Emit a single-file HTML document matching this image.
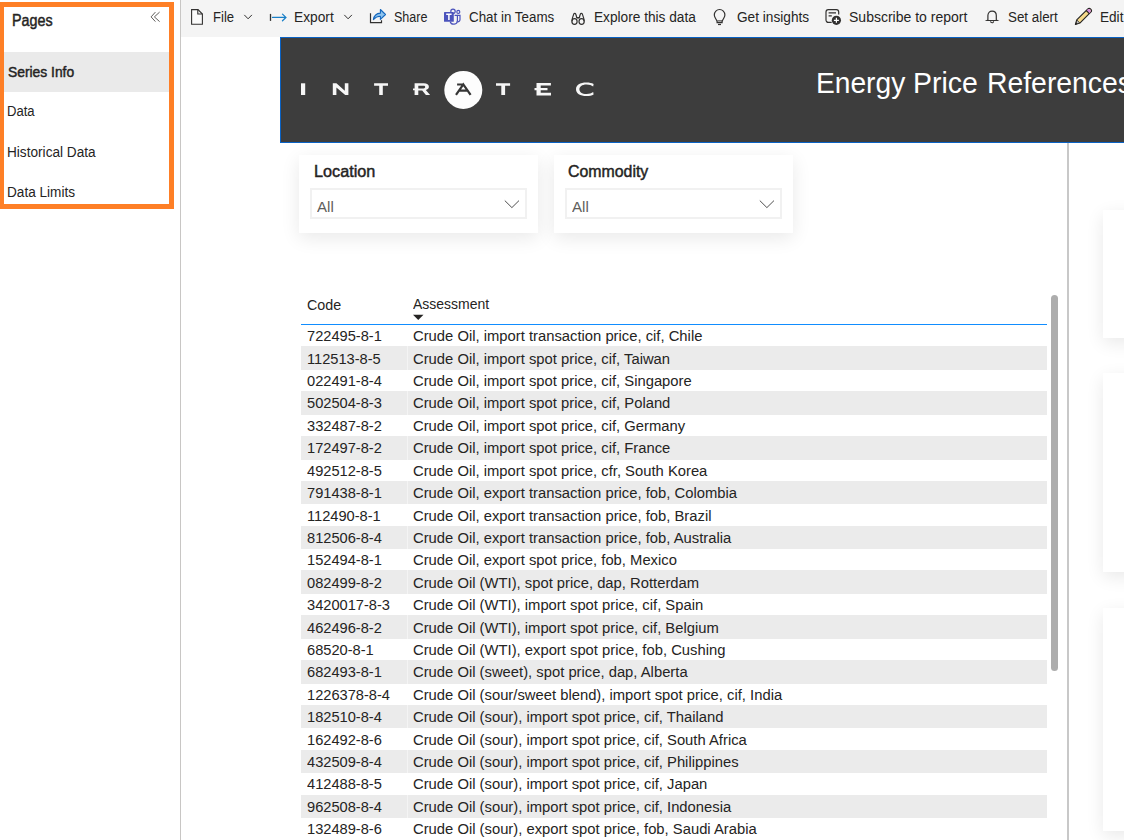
<!DOCTYPE html>
<html><head><meta charset="utf-8">
<style>
*{margin:0;padding:0;box-sizing:border-box}
html,body{width:1124px;height:840px;overflow:hidden;background:#fff;font-family:"Liberation Sans",sans-serif;color:#252423}
.abs{position:absolute}
.tx{position:absolute;white-space:nowrap;line-height:1;transform-origin:0 0}
.card{position:absolute;background:#fff;box-shadow:0 5px 18px rgba(0,0,0,0.09)}
.dd{position:absolute;border:2px solid #f1f1f1;background:#fff}
.row{position:absolute;left:301px;width:746px;height:22.41px}
.row.g{background:#ebebeb}
.c1,.c2{font-size:15.4px;color:#252423}
</style></head>
<body>
<div class="abs" style="left:180px;top:0;width:1px;height:840px;background:#c8c6c4"></div>
<div class="abs" style="left:-1px;top:2px;width:175px;height:207px;border:5px solid #fe7f26"></div>
<div class="abs" style="left:4px;top:52px;width:165px;height:40px;background:#eaeaea"></div>
<div id="pages" class="tx" style="left:12.00px;top:12.92px;font-size:16px;color:#252423;-webkit-text-stroke:0.45px #252423;transform:scaleX(0.8945)">Pages</div><div id="p1" class="tx" style="left:7.80px;top:64.78px;font-size:14px;color:#252423;-webkit-text-stroke:0.45px #252423;transform:scaleX(0.9883)">Series Info</div><div id="p2" class="tx" style="left:6.90px;top:104.18px;font-size:14px;font-weight:normal;color:#252423;transform:scaleX(0.9343)">Data</div><div id="p3" class="tx" style="left:6.60px;top:145.08px;font-size:14px;font-weight:normal;color:#252423;transform:scaleX(0.9737)">Historical Data</div><div id="p4" class="tx" style="left:6.60px;top:185.28px;font-size:14px;font-weight:normal;color:#252423;transform:scaleX(0.9716)">Data Limits</div>
<div class="abs" style="left:181px;top:0;width:943px;height:37px;background:#f4f4f4"></div>
<svg class="abs" style="left:0;top:0" width="1124" height="37" viewBox="0 0 1124 37">
 <g fill="none" stroke="#323130" stroke-width="1.1">
  <path d="M191.6 9.6h6.4l4.4 4.4v10.2h-10.8z" fill="#fbfbfb"/>
  <path d="M197.8 9.6v4.4h4.6"/>
  <path d="M244.3 14.9l3.8 3.9 3.8-3.9" stroke-width="1"/>
  <path d="M344.3 14.9l3.8 3.9 3.8-3.9" stroke-width="1"/>
  <path d="M270.5 13.9v7" stroke-width="1.3"/>
  <path d="M370.5 13.2v9.4h11v-2.4" stroke-width="1.2"/>
  <path d="M714.3 15.1c0-3.3 2.4-5.6 5.3-5.6s5.3 2.3 5.3 5.6c0 2.6-2.1 3.9-2.8 6.4v1.2h-5v-1.2c-0.7-2.5-2.8-3.8-2.8-6.4z" stroke-width="1.2"/>
  <path d="M717.3 20.9h5" stroke-width="1"/>
  <path d="M718 24.5h3" stroke-width="1.2"/>
  <path d="M826 20.2v-8.3a2.3 2.3 0 0 1 2.3-2.3h8.1a2.3 2.3 0 0 1 2.3 2.3v2.7M831.7 22.4h-3.4a2.3 2.3 0 0 1-2.3-2.3" stroke-width="1.2"/>
  <path d="M828.6 12.9h7.4M828.6 15.9h3.2" stroke-width="1.3"/>
  <path d="M987.9 19.9v-4.3c0-2.7 1.8-4.5 4.2-4.5s4.2 1.8 4.2 4.5v4.3l1 0.6h-10.4z" stroke-width="1.2"/>
  <path d="M990.6 21.3a1.5 1.5 0 0 0 3 0" stroke-width="1.1"/>
 </g>
 <g fill="#323130"><circle cx="836.4" cy="20.3" r="4.6"/></g>
 <path d="M836.4 17.8v5M833.9 20.3h5" stroke="#fff" stroke-width="1.2"/>
 <g fill="none" stroke="#1a80c8" stroke-width="1.3" stroke-linecap="round">
  <path d="M272.5 17.4h13.2M282.5 14.1l3.4 3.3-3.4 3.3"/>
 </g>
 <path d="M373.4 19.6c0.6-3.7 3.2-6.3 7-6.5v-3.6l5.1 5-5.1 4.9v-3.1c-3 0.1-5.3 1.3-7 3.3z" fill="#8cc3ef" stroke="#1567bd" stroke-width="1.1" stroke-linejoin="round"/>
 <g fill="#4b53bc">
  <rect x="444" y="12.1" width="9.8" height="9.7" rx="0.6"/>
 </g>
 <g fill="none" stroke="#4b53bc" stroke-width="1.2">
  <circle cx="453" cy="11.3" r="2.2"/>
  <circle cx="458.3" cy="11.9" r="1.5"/>
  <path d="M454.6 15.3h2.8v5.2a3.7 3.7 0 0 1-7.2 1.2"/>
  <path d="M457.4 15.3h2.6v4.2a2.3 2.3 0 0 1-2.6 2.3"/>
 </g>
 <path d="M446.2 14.3h5.4M448.9 14.3v5.8" stroke="#fff" stroke-width="1.5"/>
 <g fill="none" stroke="#323130" stroke-width="1.2">
  <path d="M572 21.2c0-2.6 0.9-5 1.8-7.3 0.3-0.7 1.6-0.7 1.9 0 0.6 1.4 0.9 2.6 1 4"/>
  <ellipse cx="574.5" cy="21.5" rx="2.6" ry="2.8"/>
  <path d="M584.1 21.2c0-2.6-0.9-5-1.8-7.3-0.3-0.7-1.6-0.7-1.9 0-0.6 1.4-0.9 2.6-1 4"/>
  <ellipse cx="581.6" cy="21.5" rx="2.6" ry="2.8"/>
  <path d="M576.8 17.8h2.6" stroke-width="1.6"/>
 </g>
 <g>
  <path d="M1087.64 9.04L1076.74 19.94L1075.4 24.4L1079.86 23.06L1090.76 12.16A2.2 2.2 0 0 0 1087.64 9.04Z" fill="#f6d98a" stroke="#252423" stroke-width="1.15" stroke-linejoin="round"/>
  <path d="M1087.9 9.3a1.9 1.9 0 0 1 2.6 2.6l-1.3 1.3-2.6-2.6z" fill="#d98ce0"/>
  <path d="M1086.2 10.5l3.1 3.1" stroke="#252423" stroke-width="1.1"/>
  <path d="M1077.2 20.3l2.4 2.4-3.2 1z" fill="#f8f8f8" stroke="#252423" stroke-width="0.8"/>
  <path d="M1075.3 24.5l0.6-2 1.4 1.4z" fill="#252423"/>
 </g>
</svg>
<svg class="abs" style="left:0;top:0" width="200" height="37" viewBox="0 0 200 37">
 <path d="M155.4 12.1l-4.3 4.8 4.3 4.7M159.6 12.1l-5.2 4.8 5.2 4.7" fill="none" stroke="#605e5c" stroke-width="1"/>
</svg>
<div id="t1" class="tx" style="left:213.00px;top:10.38px;font-size:14px;font-weight:normal;color:#252423;transform:scaleX(0.9348)">File</div><div id="t2" class="tx" style="left:293.90px;top:10.38px;font-size:14px;font-weight:normal;color:#252423;transform:scaleX(0.9815)">Export</div><div id="t3" class="tx" style="left:394.10px;top:10.38px;font-size:14px;font-weight:normal;color:#252423;transform:scaleX(0.8963)">Share</div><div id="t4" class="tx" style="left:469.00px;top:10.38px;font-size:14px;font-weight:normal;color:#252423;transform:scaleX(0.9551)">Chat in Teams</div><div id="t5" class="tx" style="left:594.30px;top:10.38px;font-size:14px;font-weight:normal;color:#252423;transform:scaleX(0.9769)">Explore this data</div><div id="t6" class="tx" style="left:736.90px;top:10.38px;font-size:14px;font-weight:normal;color:#252423;transform:scaleX(0.9756)">Get insights</div><div id="t7" class="tx" style="left:849.40px;top:10.38px;font-size:14px;font-weight:normal;color:#252423;transform:scaleX(1.0001)">Subscribe to report</div><div id="t8" class="tx" style="left:1008.20px;top:10.38px;font-size:14px;font-weight:normal;color:#252423;transform:scaleX(0.9542)">Set alert</div><div id="t9" class="tx" style="left:1099.80px;top:10.38px;font-size:14px;font-weight:normal;color:#252423;transform:scaleX(0.9700)">Edit</div>
<div class="abs" style="left:280px;top:37px;width:900px;height:106px;background:#3d3d3d;border:1px solid #0a62c4;border-right:none"></div>
<svg class="abs" style="left:280px;top:37px" width="400" height="106" viewBox="280 37 400 106">
 <g fill="#f6f6f6">
  <rect x="301" y="83.3" width="4.2" height="11.7"/>
  <path d="M332.8 83.3h3.6l8.4 7.4v-7.4h3.6v11.7h-3.2l-8.8-7.6v7.6h-3.6z"/>
  <path d="M374.1 83.3h13.9v2.5h-5.2v9.2h-3.6v-9.2h-5.1z"/>
  <path d="M414.6 83.3h9.2c3.2 0 5.1 1.5 5.1 3.5c0 1.7-1.3 2.8-3.1 3.2l4.3 5h-4.2l-3.7-4.6h-3.9v4.6h-3.7v-4.8h-1.6v-1.7h1.6z M418.3 85.8v2.6h5.2c1.1 0 1.7-0.5 1.7-1.3s-0.6-1.3-1.7-1.3z"/>
  <path d="M496 83.2h14.1v2.6h-5v9.2h-3.8v-9.2h-5.3z"/>
  <path d="M536.5 83h14.4v2.4h-10.2v2.5h6.8v2.3h-6.8v2.6h10.3v2.6h-14.5v-5.2h-2v-2.3h2z"/>
  <path d="M593.2 86.4c-1.6-1.3-3.8-2-6.6-2c-4.8 0-7.2 2.2-7.2 4.8s2.4 4.9 7.2 4.9c2.8 0 5-0.7 6.6-2l0.4 2.4c-1.8 1-4.2 1.5-7.1 1.5c-6.6 0-10.5-2.8-10.5-6.8s3.9-6.7 10.5-6.7c2.9 0 5.3 0.5 7.1 1.5z"/>
 </g>
 <circle cx="463.3" cy="89.9" r="19" fill="#fdfdfd"/>
 <g fill="none" stroke="#363636" stroke-width="2.2" stroke-linejoin="miter">
  <path d="M457.1 84.5h6.6M456 94.8l7.3-10.4l7.3 10.4M459.6 90.6h7.4"/>
 </g>
</svg>

<div class="tx" style="left:815.9px;top:68.1px;font-size:30px;color:#fff;transform:scaleX(0.939)">Energy</div>
<div class="tx" style="left:913.4px;top:68.1px;font-size:30px;color:#fff;transform:scaleX(0.947)">Price</div>
<div class="tx" style="left:986.6px;top:68.1px;font-size:30px;color:#fff;transform:scaleX(0.945)">References</div>
<div class="abs" style="left:1067px;top:143px;width:2px;height:697px;background:#c8c8c8"></div>
<div class="card" style="left:299px;top:155px;width:239px;height:78px"></div>
<div class="dd" style="left:310px;top:188px;width:217px;height:31px"></div>
<div class="card" style="left:554px;top:155px;width:239px;height:78px"></div>
<div class="dd" style="left:565px;top:188px;width:217px;height:31px"></div>
<svg class="abs" style="left:0;top:180px" width="800" height="40" viewBox="0 180 800 40">
 <path d="M504.8 200.6l7.1 7 7.1-7M759.8 200.6l7.1 7 7.1-7" fill="none" stroke="#3a3a3a" stroke-width="0.9"/>
</svg>
<div id="loc" class="tx" style="left:314.40px;top:164.12px;font-size:16px;color:#252423;-webkit-text-stroke:0.45px #252423;transform:scaleX(1.0147)">Location</div><div id="com" class="tx" style="left:568.20px;top:164.12px;font-size:16px;color:#252423;-webkit-text-stroke:0.45px #252423;transform:scaleX(0.9924)">Commodity</div><div id="all1" class="tx" style="left:317.10px;top:199.51px;font-size:14.5px;font-weight:normal;color:#605e5c;transform:scaleX(1.0381)">All</div><div id="all2" class="tx" style="left:572.30px;top:199.51px;font-size:14.5px;font-weight:normal;color:#605e5c;transform:scaleX(1.0422)">All</div>
<div class="card" style="left:1103px;top:210px;width:40px;height:127.6px"></div>
<div class="card" style="left:1103px;top:373px;width:40px;height:199px"></div>
<div class="card" style="left:1103px;top:608px;width:40px;height:223px"></div>
<div id="hcode" class="tx" style="left:306.60px;top:297.25px;font-size:15px;font-weight:normal;color:#252423;transform:scaleX(0.9552)">Code</div><div id="hass" class="tx" style="left:412.60px;top:296.25px;font-size:15px;font-weight:normal;color:#252423;transform:scaleX(0.9331)">Assessment</div>
<svg class="abs" style="left:400px;top:310px" width="30" height="14" viewBox="400 310 30 14"><path d="M413 314.8h10.5l-5.25 5.3z" fill="#252423"/></svg>
<div class="abs" style="left:301px;top:323.5px;width:746px;height:1.6px;background:#118dff"></div>
<div class="tx c1" style="left:307.30px;top:328.25px;transform:scaleX(0.9507)">722495-8-1</div><div class="tx c2" style="left:413.40px;top:328.25px;transform:scaleX(0.9612)">Crude Oil, import transaction price, cif, Chile</div><div class="row g" style="top:346.31px;height:23.61px"></div><div class="tx c1" style="left:307.30px;top:350.66px;transform:scaleX(0.9507)">112513-8-5</div><div class="tx c2" style="left:413.40px;top:350.66px;transform:scaleX(0.9612)">Crude Oil, import spot price, cif, Taiwan</div><div class="tx c1" style="left:307.30px;top:373.07px;transform:scaleX(0.9507)">022491-8-4</div><div class="tx c2" style="left:413.40px;top:373.07px;transform:scaleX(0.9612)">Crude Oil, import spot price, cif, Singapore</div><div class="row g" style="top:391.13px;height:23.61px"></div><div class="tx c1" style="left:307.30px;top:395.48px;transform:scaleX(0.9507)">502504-8-3</div><div class="tx c2" style="left:413.40px;top:395.48px;transform:scaleX(0.9612)">Crude Oil, import spot price, cif, Poland</div><div class="tx c1" style="left:307.30px;top:417.89px;transform:scaleX(0.9507)">332487-8-2</div><div class="tx c2" style="left:413.40px;top:417.89px;transform:scaleX(0.9612)">Crude Oil, import spot price, cif, Germany</div><div class="row g" style="top:435.95px;height:23.61px"></div><div class="tx c1" style="left:307.30px;top:440.30px;transform:scaleX(0.9507)">172497-8-2</div><div class="tx c2" style="left:413.40px;top:440.30px;transform:scaleX(0.9612)">Crude Oil, import spot price, cif, France</div><div class="tx c1" style="left:307.30px;top:462.71px;transform:scaleX(0.9507)">492512-8-5</div><div class="tx c2" style="left:413.40px;top:462.71px;transform:scaleX(0.9612)">Crude Oil, import spot price, cfr, South Korea</div><div class="row g" style="top:480.77px;height:23.61px"></div><div class="tx c1" style="left:307.30px;top:485.12px;transform:scaleX(0.9507)">791438-8-1</div><div class="tx c2" style="left:413.40px;top:485.12px;transform:scaleX(0.9612)">Crude Oil, export transaction price, fob, Colombia</div><div class="tx c1" style="left:307.30px;top:507.53px;transform:scaleX(0.9507)">112490-8-1</div><div class="tx c2" style="left:413.40px;top:507.53px;transform:scaleX(0.9612)">Crude Oil, export transaction price, fob, Brazil</div><div class="row g" style="top:525.59px;height:23.61px"></div><div class="tx c1" style="left:307.30px;top:529.94px;transform:scaleX(0.9507)">812506-8-4</div><div class="tx c2" style="left:413.40px;top:529.94px;transform:scaleX(0.9612)">Crude Oil, export transaction price, fob, Australia</div><div class="tx c1" style="left:307.30px;top:552.35px;transform:scaleX(0.9507)">152494-8-1</div><div class="tx c2" style="left:413.40px;top:552.35px;transform:scaleX(0.9612)">Crude Oil, export spot price, fob, Mexico</div><div class="row g" style="top:570.41px;height:23.61px"></div><div class="tx c1" style="left:307.30px;top:574.76px;transform:scaleX(0.9507)">082499-8-2</div><div class="tx c2" style="left:413.40px;top:574.76px;transform:scaleX(0.9612)">Crude Oil (WTI), spot price, dap, Rotterdam</div><div class="tx c1" style="left:307.30px;top:597.17px;transform:scaleX(0.9507)">3420017-8-3</div><div class="tx c2" style="left:413.40px;top:597.17px;transform:scaleX(0.9612)">Crude Oil (WTI), import spot price, cif, Spain</div><div class="row g" style="top:615.23px;height:23.61px"></div><div class="tx c1" style="left:307.30px;top:619.58px;transform:scaleX(0.9507)">462496-8-2</div><div class="tx c2" style="left:413.40px;top:619.58px;transform:scaleX(0.9612)">Crude Oil (WTI), import spot price, cif, Belgium</div><div class="tx c1" style="left:307.30px;top:641.99px;transform:scaleX(0.9507)">68520-8-1</div><div class="tx c2" style="left:413.40px;top:641.99px;transform:scaleX(0.9612)">Crude Oil (WTI), export spot price, fob, Cushing</div><div class="row g" style="top:660.05px;height:23.61px"></div><div class="tx c1" style="left:307.30px;top:664.40px;transform:scaleX(0.9507)">682493-8-1</div><div class="tx c2" style="left:413.40px;top:664.40px;transform:scaleX(0.9612)">Crude Oil (sweet), spot price, dap, Alberta</div><div class="tx c1" style="left:307.30px;top:686.81px;transform:scaleX(0.9507)">1226378-8-4</div><div class="tx c2" style="left:413.40px;top:686.81px;transform:scaleX(0.9612)">Crude Oil (sour/sweet blend), import spot price, cif, India</div><div class="row g" style="top:704.87px;height:23.61px"></div><div class="tx c1" style="left:307.30px;top:709.22px;transform:scaleX(0.9507)">182510-8-4</div><div class="tx c2" style="left:413.40px;top:709.22px;transform:scaleX(0.9612)">Crude Oil (sour), import spot price, cif, Thailand</div><div class="tx c1" style="left:307.30px;top:731.63px;transform:scaleX(0.9507)">162492-8-6</div><div class="tx c2" style="left:413.40px;top:731.63px;transform:scaleX(0.9612)">Crude Oil (sour), import spot price, cif, South Africa</div><div class="row g" style="top:749.69px;height:23.61px"></div><div class="tx c1" style="left:307.30px;top:754.04px;transform:scaleX(0.9507)">432509-8-4</div><div class="tx c2" style="left:413.40px;top:754.04px;transform:scaleX(0.9612)">Crude Oil (sour), import spot price, cif, Philippines</div><div class="tx c1" style="left:307.30px;top:776.45px;transform:scaleX(0.9507)">412488-8-5</div><div class="tx c2" style="left:413.40px;top:776.45px;transform:scaleX(0.9612)">Crude Oil (sour), import spot price, cif, Japan</div><div class="row g" style="top:794.51px;height:23.61px"></div><div class="tx c1" style="left:307.30px;top:798.86px;transform:scaleX(0.9507)">962508-8-4</div><div class="tx c2" style="left:413.40px;top:798.86px;transform:scaleX(0.9612)">Crude Oil (sour), import spot price, cif, Indonesia</div><div class="tx c1" style="left:307.30px;top:821.27px;transform:scaleX(0.9507)">132489-8-6</div><div class="tx c2" style="left:413.40px;top:821.27px;transform:scaleX(0.9612)">Crude Oil (sour), export spot price, fob, Saudi Arabia</div>
<div class="abs" style="left:407px;top:346px;width:1px;height:494px;background:rgba(255,255,255,0.45)"></div>
<div class="abs" style="left:1050.6px;top:295px;width:7.7px;height:376px;border-radius:4px;background:#adadad"></div>
</body></html>
